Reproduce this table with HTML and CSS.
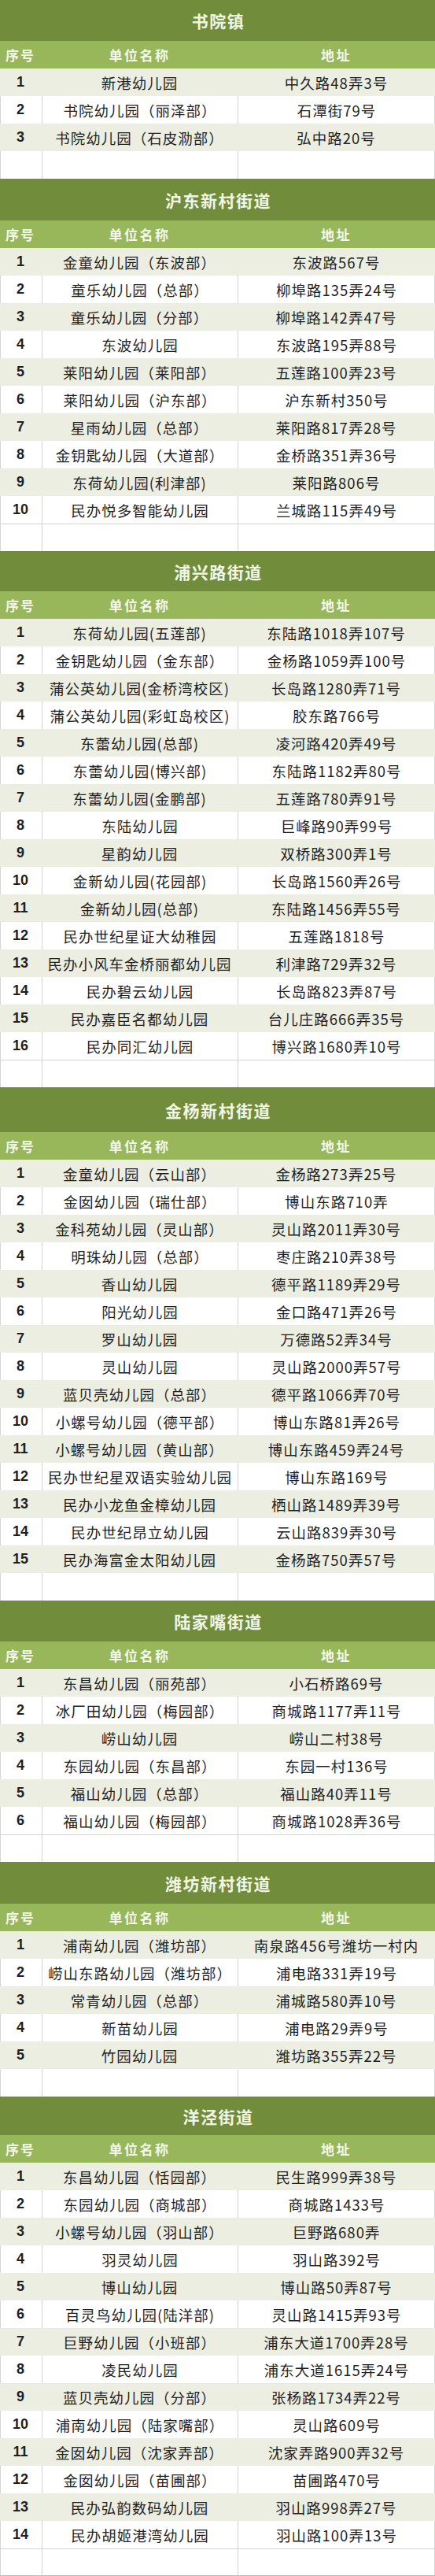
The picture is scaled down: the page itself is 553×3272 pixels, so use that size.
FILE: index.html
```html
<!DOCTYPE html>
<html lang="zh-CN">
<head>
<meta charset="utf-8">
<title>幼儿园名单</title>
<link rel="stylesheet" href="styles.css">
</head>
<body>
<div class="page">

<section class="sec">
<div class="title">书院镇</div>
<div class="head"><div>序号</div><div>单位名称</div><div>地址</div></div>
<div class="row g"><div class="num">1</div><div>新港幼儿园</div><div>中久路48弄3号</div></div>
<div class="row w"><div class="num">2</div><div>书院幼儿园（丽泽部）</div><div>石潭街79号</div></div>
<div class="row g"><div class="num">3</div><div>书院幼儿园（石皮泐部）</div><div>弘中路20号</div></div>
<div class="row w empty"><div></div><div></div><div></div></div>
</section>

<section class="sec">
<div class="title">沪东新村街道</div>
<div class="head"><div>序号</div><div>单位名称</div><div>地址</div></div>
<div class="row g"><div class="num">1</div><div>金童幼儿园（东波部）</div><div>东波路567号</div></div>
<div class="row w"><div class="num">2</div><div>童乐幼儿园（总部）</div><div>柳埠路135弄24号</div></div>
<div class="row g"><div class="num">3</div><div>童乐幼儿园（分部）</div><div>柳埠路142弄47号</div></div>
<div class="row w"><div class="num">4</div><div>东波幼儿园</div><div>东波路195弄88号</div></div>
<div class="row g"><div class="num">5</div><div>莱阳幼儿园（莱阳部）</div><div>五莲路100弄23号</div></div>
<div class="row w"><div class="num">6</div><div>莱阳幼儿园（沪东部）</div><div>沪东新村350号</div></div>
<div class="row g"><div class="num">7</div><div>星雨幼儿园（总部）</div><div>莱阳路817弄28号</div></div>
<div class="row w"><div class="num">8</div><div>金钥匙幼儿园（大道部）</div><div>金桥路351弄36号</div></div>
<div class="row g"><div class="num">9</div><div>东荷幼儿园(利津部)</div><div>莱阳路806号</div></div>
<div class="row w"><div class="num">10</div><div>民办悦多智能幼儿园</div><div>兰城路115弄49号</div></div>
<div class="row w empty"><div></div><div></div><div></div></div>
</section>

<section class="sec">
<div class="title">浦兴路街道</div>
<div class="head"><div>序号</div><div>单位名称</div><div>地址</div></div>
<div class="row g"><div class="num">1</div><div>东荷幼儿园(五莲部)</div><div>东陆路1018弄107号</div></div>
<div class="row w"><div class="num">2</div><div>金钥匙幼儿园（金东部）</div><div>金杨路1059弄100号</div></div>
<div class="row g"><div class="num">3</div><div>蒲公英幼儿园(金桥湾校区)</div><div>长岛路1280弄71号</div></div>
<div class="row w"><div class="num">4</div><div>蒲公英幼儿园(彩虹岛校区)</div><div>胶东路766号</div></div>
<div class="row g"><div class="num">5</div><div>东蕾幼儿园(总部)</div><div>凌河路420弄49号</div></div>
<div class="row w"><div class="num">6</div><div>东蕾幼儿园(博兴部)</div><div>东陆路1182弄80号</div></div>
<div class="row g"><div class="num">7</div><div>东蕾幼儿园(金鹏部)</div><div>五莲路780弄91号</div></div>
<div class="row w"><div class="num">8</div><div>东陆幼儿园</div><div>巨峰路90弄99号</div></div>
<div class="row g"><div class="num">9</div><div>星韵幼儿园</div><div>双桥路300弄1号</div></div>
<div class="row w"><div class="num">10</div><div>金新幼儿园(花园部)</div><div>长岛路1560弄26号</div></div>
<div class="row g"><div class="num">11</div><div>金新幼儿园(总部)</div><div>东陆路1456弄55号</div></div>
<div class="row w"><div class="num">12</div><div>民办世纪星证大幼稚园</div><div>五莲路1818号</div></div>
<div class="row g"><div class="num">13</div><div>民办小风车金桥丽都幼儿园</div><div>利津路729弄32号</div></div>
<div class="row w"><div class="num">14</div><div>民办碧云幼儿园</div><div>长岛路823弄87号</div></div>
<div class="row g"><div class="num">15</div><div>民办嘉臣名都幼儿园</div><div>台儿庄路666弄35号</div></div>
<div class="row w"><div class="num">16</div><div>民办同汇幼儿园</div><div>博兴路1680弄10号</div></div>
<div class="row w empty"><div></div><div></div><div></div></div>
</section>

<section class="sec">
<div class="title">金杨新村街道</div>
<div class="head"><div>序号</div><div>单位名称</div><div>地址</div></div>
<div class="row g"><div class="num">1</div><div>金童幼儿园（云山部）</div><div>金杨路273弄25号</div></div>
<div class="row w"><div class="num">2</div><div>金囡幼儿园（瑞仕部）</div><div>博山东路710弄</div></div>
<div class="row g"><div class="num">3</div><div>金科苑幼儿园（灵山部）</div><div>灵山路2011弄30号</div></div>
<div class="row w"><div class="num">4</div><div>明珠幼儿园（总部）</div><div>枣庄路210弄38号</div></div>
<div class="row g"><div class="num">5</div><div>香山幼儿园</div><div>德平路1189弄29号</div></div>
<div class="row w"><div class="num">6</div><div>阳光幼儿园</div><div>金口路471弄26号</div></div>
<div class="row g"><div class="num">7</div><div>罗山幼儿园</div><div>万德路52弄34号</div></div>
<div class="row w"><div class="num">8</div><div>灵山幼儿园</div><div>灵山路2000弄57号</div></div>
<div class="row g"><div class="num">9</div><div>蓝贝壳幼儿园（总部）</div><div>德平路1066弄70号</div></div>
<div class="row w"><div class="num">10</div><div>小螺号幼儿园（德平部）</div><div>博山东路81弄26号</div></div>
<div class="row g"><div class="num">11</div><div>小螺号幼儿园（黄山部）</div><div>博山东路459弄24号</div></div>
<div class="row w"><div class="num">12</div><div>民办世纪星双语实验幼儿园</div><div>博山东路169号</div></div>
<div class="row g"><div class="num">13</div><div>民办小龙鱼金樟幼儿园</div><div>栖山路1489弄39号</div></div>
<div class="row w"><div class="num">14</div><div>民办世纪昂立幼儿园</div><div>云山路839弄30号</div></div>
<div class="row g"><div class="num">15</div><div>民办海富金太阳幼儿园</div><div>金杨路750弄57号</div></div>
<div class="row w empty"><div></div><div></div><div></div></div>
</section>

<section class="sec">
<div class="title">陆家嘴街道</div>
<div class="head"><div>序号</div><div>单位名称</div><div>地址</div></div>
<div class="row g"><div class="num">1</div><div>东昌幼儿园（丽苑部）</div><div>小石桥路69号</div></div>
<div class="row w"><div class="num">2</div><div>冰厂田幼儿园（梅园部）</div><div>商城路1177弄11号</div></div>
<div class="row g"><div class="num">3</div><div>崂山幼儿园</div><div>崂山二村38号</div></div>
<div class="row w"><div class="num">4</div><div>东园幼儿园（东昌部）</div><div>东园一村136号</div></div>
<div class="row g"><div class="num">5</div><div>福山幼儿园（总部）</div><div>福山路40弄11号</div></div>
<div class="row w"><div class="num">6</div><div>福山幼儿园（梅园部）</div><div>商城路1028弄36号</div></div>
<div class="row w empty"><div></div><div></div><div></div></div>
</section>

<section class="sec">
<div class="title">潍坊新村街道</div>
<div class="head"><div>序号</div><div>单位名称</div><div>地址</div></div>
<div class="row g"><div class="num">1</div><div>浦南幼儿园（潍坊部）</div><div>南泉路456号潍坊一村内</div></div>
<div class="row w"><div class="num">2</div><div>崂山东路幼儿园（潍坊部）</div><div>浦电路331弄19号</div></div>
<div class="row g"><div class="num">3</div><div>常青幼儿园（总部）</div><div>浦城路580弄10号</div></div>
<div class="row w"><div class="num">4</div><div>新苗幼儿园</div><div>浦电路29弄9号</div></div>
<div class="row g"><div class="num">5</div><div>竹园幼儿园</div><div>潍坊路355弄22号</div></div>
<div class="row w empty"><div></div><div></div><div></div></div>
</section>

<section class="sec">
<div class="title">洋泾街道</div>
<div class="head"><div>序号</div><div>单位名称</div><div>地址</div></div>
<div class="row g"><div class="num">1</div><div>东昌幼儿园（恬园部）</div><div>民生路999弄38号</div></div>
<div class="row w"><div class="num">2</div><div>东园幼儿园（商城部）</div><div>商城路1433号</div></div>
<div class="row g"><div class="num">3</div><div>小螺号幼儿园（羽山部）</div><div>巨野路680弄</div></div>
<div class="row w"><div class="num">4</div><div>羽灵幼儿园</div><div>羽山路392号</div></div>
<div class="row g"><div class="num">5</div><div>博山幼儿园</div><div>博山路50弄87号</div></div>
<div class="row w"><div class="num">6</div><div>百灵鸟幼儿园(陆洋部)</div><div>灵山路1415弄93号</div></div>
<div class="row g"><div class="num">7</div><div>巨野幼儿园（小班部）</div><div>浦东大道1700弄28号</div></div>
<div class="row w"><div class="num">8</div><div>凌民幼儿园</div><div>浦东大道1615弄24号</div></div>
<div class="row g"><div class="num">9</div><div>蓝贝壳幼儿园（分部）</div><div>张杨路1734弄22号</div></div>
<div class="row w"><div class="num">10</div><div>浦南幼儿园（陆家嘴部）</div><div>灵山路609号</div></div>
<div class="row g"><div class="num">11</div><div>金囡幼儿园（沈家弄部）</div><div>沈家弄路900弄32号</div></div>
<div class="row w"><div class="num">12</div><div>金囡幼儿园（苗圃部）</div><div>苗圃路470号</div></div>
<div class="row g"><div class="num">13</div><div>民办弘韵数码幼儿园</div><div>羽山路998弄27号</div></div>
<div class="row w"><div class="num">14</div><div>民办胡姬港湾幼儿园</div><div>羽山路100弄13号</div></div>
<div class="row w empty"><div></div><div></div><div></div></div>
</section>

</div>
</body>
</html>
```
FILE: styles.css
```css
* { box-sizing: border-box; }
html, body { margin: 0; padding: 0; background: #ffffff; }
body {
  font-family: "Noto Sans CJK SC", "Noto Sans", sans-serif;
  color: #1f1f1f;
}
.page {
  width: 553px;
  display: flex;
  flex-direction: column;
}
.sec { display: flex; flex-direction: column; }

.title {
  height: 52px;
  background: #718d3c;
  color: #f1f5e6;
  font-size: 21px;
  font-weight: 700;
  letter-spacing: 1.5px;
  display: flex;
  align-items: center;
  justify-content: center;
  padding-left: 2px;
}
.sec:nth-child(2) .title { height: 53px; }
.sec:nth-child(3) .title { height: 51px; }
.sec:nth-child(4) .title { height: 57px; }
.sec:nth-child(6) .title { height: 53px; }
.sec:nth-child(7) .title { height: 49px; }

.head, .row {
  display: grid;
  grid-template-columns: 53px 249px 1fr;
  height: 35px;
}
.head {
  background: #97b75a;
  color: #f4f7ec;
  font-size: 17px;
  font-weight: 700;
  letter-spacing: 2.5px;
}
.head > div, .row > div {
  display: flex;
  align-items: center;
  justify-content: center;
  white-space: nowrap;
}
.head > div:first-child { justify-content: flex-start; padding-left: 7px; letter-spacing: 2px; }

.row {
  font-size: 18.5px;
  letter-spacing: 1px;
}
.row.g { background: #eceee2; }
.row.w {
  background: #ffffff;
  box-shadow: inset 1px 0 #d6d6d6, inset -1px 0 #d6d6d6;
}
.row.w > div + div { border-left: 1px solid #d3d3d3; }
.row.w + .row.empty { border-top: 1px solid #d3d3d3; }
.sec:last-child .row.empty { border-bottom: 1px solid #bdbdbd; }

.row > .num {
  font-family: "Liberation Sans", Arial, sans-serif;
  font-weight: 700;
  font-size: 18px;
  letter-spacing: 0;
  padding-right: 1px;
}
```
